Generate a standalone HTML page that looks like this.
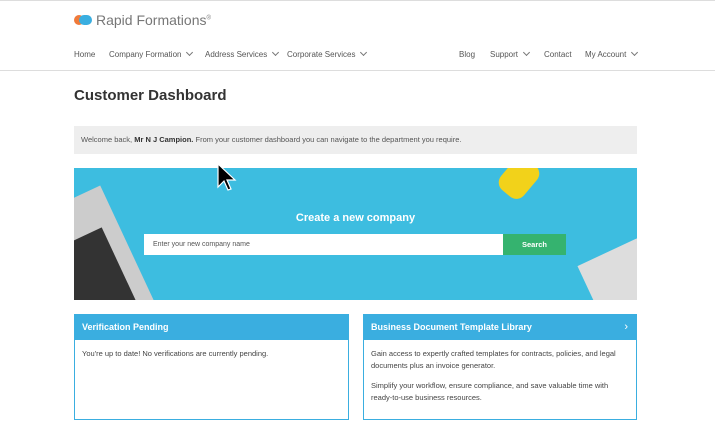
<!DOCTYPE html>
<html><head><style>
*{margin:0;padding:0;box-sizing:border-box}
body{width:715px;height:431px;background:#fff;font-family:"Liberation Sans",sans-serif;position:relative;overflow:hidden;color:#333}
.a{position:absolute}
.nav{font-size:8px;color:#555;top:50px}
.chev{display:inline-block;width:5px;height:5px;border-right:1px solid #777;border-bottom:1px solid #777;transform:rotate(45deg);margin-left:6px;position:relative;top:-2px}
.card{border:1px solid #3aaee0;background:#fff}
.card .h{background:#3aaee0;color:#fff;font-weight:bold;font-size:9px;height:25px;line-height:25px;padding-left:7px}
.card .b{font-size:7.5px;color:#444;padding:8px 7px;line-height:12px}
</style></head><body>
<div class="a" style="left:0;top:0;width:715px;height:1px;background:#ddd"></div>
<div class="a" style="left:74px;top:15px;width:10px;height:10px;border-radius:5px;background:#f07a3a"></div>
<div class="a" style="left:79px;top:15px;width:13px;height:10px;border-radius:5px;background:#3aaee0"></div>
<div class="a" style="left:96px;top:12px;font-size:14px;color:#777">Rapid Formations<sup style="font-size:6px">®</sup></div>
<div class="a nav" style="left:74px">Home</div>
<div class="a nav" style="left:109px">Company Formation<span class="chev"></span></div>
<div class="a nav" style="left:205px">Address Services<span class="chev"></span></div>
<div class="a nav" style="left:287px">Corporate Services<span class="chev"></span></div>
<div class="a nav" style="left:459px">Blog</div>
<div class="a nav" style="left:490px">Support<span class="chev"></span></div>
<div class="a nav" style="left:544px">Contact</div>
<div class="a nav" style="left:585px">My Account<span class="chev"></span></div>
<div class="a" style="left:0;top:70px;width:715px;height:1px;background:#ddd"></div>
<div class="a" style="left:74px;top:87px;font-size:15px;font-weight:bold;color:#333">Customer Dashboard</div>
<div class="a" style="left:74px;top:126px;width:563px;height:28px;background:#eee;font-size:7.5px;color:#555;line-height:28px;padding-left:7px">Welcome back, <b style="color:#333">Mr N J Campion.</b> From your customer dashboard you can navigate to the department you require.</div>
<div class="a" style="left:74px;top:168px;width:563px;height:132px;background:#3dbde0;overflow:hidden">
<div class="a" style="left:-30px;top:30px;width:90px;height:140px;background:#ccc;transform:rotate(-25deg)"></div>
<div class="a" style="left:-20px;top:70px;width:70px;height:90px;background:#333;transform:rotate(-25deg)"></div>
<div class="a" style="left:515px;top:80px;width:70px;height:70px;background:#ddd;transform:rotate(-25deg)"></div>
<div class="a" style="left:430px;top:-10px;width:30px;height:40px;background:#f2d21a;border-radius:10px;transform:rotate(40deg)"></div>
<div class="a" style="left:0;top:44px;width:563px;text-align:center;color:#fff;font-weight:bold;font-size:11px">Create a new company</div>
<div class="a" style="left:70px;top:66px;width:359px;height:21px;background:#fff;font-size:7px;color:#555;line-height:21px;padding-left:9px">Enter your new company name</div>
<div class="a" style="left:429px;top:66px;width:63px;height:21px;background:#35b36f;font-size:7.5px;color:#fff;font-weight:bold;line-height:21px;text-align:center">Search</div>
</div>
<svg class="a" style="left:217px;top:163px" width="20" height="30" viewBox="0 0 20 30"><path d="M1 1 L1 24 L7 18 L11 27 L14 26 L10 17 L18 17 Z" fill="#000" stroke="#fff" stroke-width="1.2"/></svg>
<div class="a card" style="left:74px;top:314px;width:275px;height:106px"><div class="h">Verification Pending</div><div class="b">You're up to date! No verifications are currently pending.</div></div>
<div class="a card" style="left:363px;top:314px;width:274px;height:106px"><div class="h">Business Document Template Library<span style="float:right;margin-right:8px;font-weight:normal;font-size:11px">›</span></div><div class="b">Gain access to expertly crafted templates for contracts, policies, and legal documents plus an invoice generator.<div style="height:8px"></div>Simplify your workflow, ensure compliance, and save valuable time with ready-to-use business resources.</div></div>
</body></html>
